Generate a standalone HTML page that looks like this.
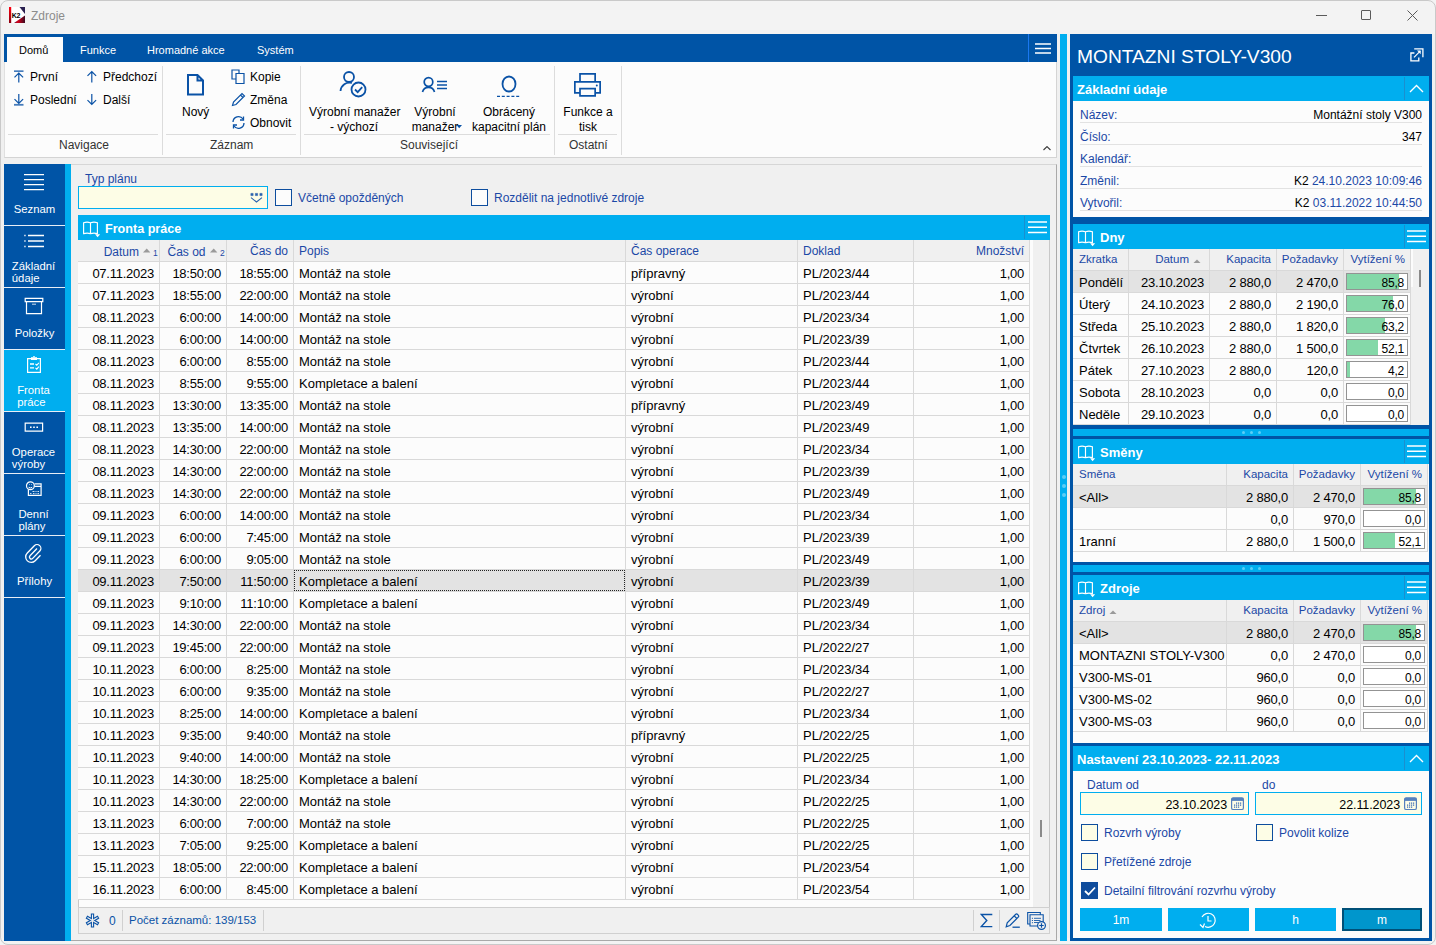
<!DOCTYPE html><html><head><meta charset="utf-8"><title>Zdroje</title><style>
*{box-sizing:border-box;margin:0;padding:0}
html,body{width:1436px;height:945px;overflow:hidden;background:#f3f3f3;font-family:"Liberation Sans",sans-serif;font-size:12px;color:#000}
.a{position:absolute}
.t{position:absolute;white-space:pre;line-height:1}
.hb{position:absolute;width:17px;height:12px}
.hb i{position:absolute;left:0;width:17px;height:1.5px;background:#fff}
table{border-collapse:separate;border-spacing:0;table-layout:fixed}
.g td{height:22px;border-right:1px solid #d9d9d9;border-bottom:1px solid #d9d9d9;padding:3px 5px 0 5px;vertical-align:top;white-space:nowrap;overflow:hidden;font-size:13px;line-height:17px;background:#fcfcfc}
.g td.r{text-align:right;letter-spacing:-0.25px}
.g tr.sel td{background:#e3e3e3}
.gh td{height:21px;border-right:1px solid #d9d9d9;border-bottom:1px solid #d9d9d9;padding:1px 5px 0 5px;white-space:nowrap;overflow:hidden;font-size:12px;line-height:20px;color:#1b48a6;background:#f0f0f0}
.gh2 td{font-size:11.3px}
.gh td.r{text-align:right}
.sec{position:absolute;background:#00aeef;color:#fff;font-weight:bold;font-size:13px}
.w{color:#fff}
.lbl{color:#1b48a6}
.cb{position:absolute;width:17px;height:17px;border:1px solid #0d4d9e;background:#fcfcfc}
.cby{background:#fdfde6}
.bar{position:absolute;border:1px solid #939393;background:#fff}
.bar i{position:absolute;left:0;top:0;bottom:0;background:#84d8a8}
.bar span{position:absolute;right:3px;top:2px;line-height:15px;font-size:12px;letter-spacing:-0.2px}
</style></head><body>
<div class="a" style="position:absolute;left:0px;top:0px;width:1436px;height:945px;border:1px solid #c9c9c9;border-radius:8px;background:#f3f3f3"></div>
<div class="a" style="position:absolute;left:1px;top:34px;width:1434px;height:904px;background:#f0f0f0"></div>
<svg class="a" style="left:9px;top:7px" width="16" height="16"><defs><linearGradient id="rg" x1="0" y1="0" x2="0" y2="1"><stop offset="0" stop-color="#ff0010"/><stop offset="1" stop-color="#8a0010"/></linearGradient><linearGradient id="bg2" x1="0" y1="0" x2="1" y2="0"><stop offset="0" stop-color="#5a1a3a"/><stop offset="0.35" stop-color="#d8001a"/><stop offset="1" stop-color="#3a0a20"/></linearGradient></defs><rect width="16" height="16" fill="#fff"/><rect x="0" y="0" width="2.2" height="16" fill="url(#rg)"/><path d="M10.5 0H16V7Z" fill="#2a2050"/><path d="M5 16L16 8.5V16Z" fill="url(#bg2)"/><text x="2.8" y="10.6" font-family="Liberation Sans" font-weight="bold" font-size="7" letter-spacing="-0.4" fill="#000">K2</text></svg>
<div class="t" style="left:31px;top:10px;font-size:12px;color:#8c8c8c">Zdroje</div>
<div class="a" style="position:absolute;left:1316px;top:15px;width:11px;height:1px;background:#5a5a5a"></div>
<div class="a" style="position:absolute;left:1361px;top:10px;width:10px;height:10px;border:1px solid #5a5a5a;border-radius:1px"></div>
<svg class="a" style="left:1407px;top:10px" width="11" height="11"><path d="M0.5 0.5L10.5 10.5M10.5 0.5L0.5 10.5" stroke="#5a5a5a" stroke-width="1"/></svg>
<div class="a" style="position:absolute;left:4px;top:34px;width:1053px;height:28px;background:#0054a6"></div>
<div class="a" style="position:absolute;left:7px;top:37px;width:56px;height:25px;background:#fcfcfc"></div>
<div class="t" style="left:19px;top:45px;font-size:11px;color:#000">Domů</div>
<div class="t w" style="left:80px;top:45px;font-size:11px">Funkce</div>
<div class="t w" style="left:147px;top:45px;font-size:11px">Hromadné akce</div>
<div class="t w" style="left:257px;top:45px;font-size:11px">Systém</div>
<div class="a" style="position:absolute;left:1028px;top:34px;width:1px;height:28px;background:#1a78f0"></div>
<svg class="a" style="left:1035px;top:41.5px" width="16" height="13"><path d="M0 2.00H16M0 6.50H16M0 11.00H16" stroke="#fff" stroke-width="1.3"/></svg>
<div class="a" style="position:absolute;left:4px;top:62px;width:1053px;height:96px;background:#fcfcfc;border-bottom:1px solid #d4d4d4;border-left:1px solid #e0e0e0;border-right:1px solid #d4d4d4"></div>
<div class="a" style="position:absolute;left:162px;top:66px;width:1px;height:89px;background:#dcdcdc"></div>
<div class="a" style="position:absolute;left:300px;top:66px;width:1px;height:89px;background:#dcdcdc"></div>
<div class="a" style="position:absolute;left:554px;top:66px;width:1px;height:89px;background:#dcdcdc"></div>
<div class="a" style="position:absolute;left:621px;top:66px;width:1px;height:89px;background:#dcdcdc"></div>
<div class="a" style="position:absolute;left:8px;top:134px;width:150px;height:1px;background:#dcdcdc"></div>
<div class="a" style="position:absolute;left:166px;top:134px;width:130px;height:1px;background:#dcdcdc"></div>
<div class="a" style="position:absolute;left:304px;top:134px;width:246px;height:1px;background:#dcdcdc"></div>
<div class="a" style="position:absolute;left:558px;top:134px;width:59px;height:1px;background:#dcdcdc"></div>
<div class="t" style="left:59px;top:139px;color:#333">Navigace</div>
<div class="t" style="left:210px;top:139px;color:#333">Záznam</div>
<div class="t" style="left:400px;top:139px;color:#333">Související</div>
<div class="t" style="left:569px;top:139px;color:#333">Ostatní</div>
<svg class="a" style="left:13px;top:69px" width="12" height="15"><path d="M1 2.2H10.5M5.8 3.5V13.5M1.5 8.3L5.8 4L10.1 8.3" stroke="#0a52a6" stroke-width="1.2" fill="none"/></svg>
<svg class="a" style="left:13px;top:92px" width="12" height="15"><path d="M1 12.8H10.5" stroke="#0a52a6" stroke-width="1.8" stroke-opacity="0.75"/><path d="M5.8 2V11.5M1.5 7.2L5.8 11.5L10.1 7.2" stroke="#0a52a6" stroke-width="1.2" fill="none"/></svg>
<svg class="a" style="left:86px;top:69px" width="12" height="15"><path d="M5.8 3V13.5M1.5 6.8L5.8 2.5L10.1 6.8" stroke="#0a52a6" stroke-width="1.2" fill="none"/></svg>
<svg class="a" style="left:86px;top:92px" width="12" height="15"><path d="M5.8 2V12.5M1.5 8.2L5.8 12.5L10.1 8.2" stroke="#0a52a6" stroke-width="1.2" fill="none"/></svg>
<div class="t" style="left:30px;top:71px">První</div>
<div class="t" style="left:30px;top:94px">Poslední</div>
<div class="t" style="left:103px;top:71px">Předchozí</div>
<div class="t" style="left:103px;top:94px">Další</div>
<svg class="a" style="left:186px;top:73px" width="19" height="23"><path d="M2 2H11.5L17 7.5V21.5H2Z M11.5 2V7.5H17" stroke="#0a52a6" stroke-width="2" fill="none" stroke-linejoin="miter"/></svg>
<div class="t" style="left:182px;top:106px">Nový</div>
<svg class="a" style="left:231px;top:69px" width="15" height="16"><path d="M1 1H8V10H1Z" stroke="#0a52a6" stroke-width="1.2" fill="none"/><path d="M5 4.5H13V14.5H5Z" stroke="#0a52a6" stroke-width="1.2" fill="#fcfcfc"/></svg>
<svg class="a" style="left:231px;top:92px" width="15" height="15"><path d="M1.5 13.5L2.5 10L11 1.5L13.5 4L5 12.5Z M9.5 3L12 5.5" stroke="#0a52a6" stroke-width="1.2" fill="none"/></svg>
<svg class="a" style="left:231px;top:115px" width="15" height="15"><path d="M2 7A5.5 5.5 0 0 1 12 4M13 8A5.5 5.5 0 0 1 3 11" stroke="#0a52a6" stroke-width="1.3" fill="none"/><path d="M12.5 1.5V5H9M2.5 13.5V10H6" stroke="#0a52a6" stroke-width="1.3" fill="none"/></svg>
<div class="t" style="left:250px;top:71px">Kopie</div>
<div class="t" style="left:250px;top:94px">Změna</div>
<div class="t" style="left:250px;top:117px">Obnovit</div>
<svg class="a" style="left:339px;top:70px" width="30" height="28"><circle cx="10" cy="7" r="5" stroke="#0a52a6" stroke-width="1.8" fill="none"/><path d="M1.5 21A9 9 0 0 1 13 13" stroke="#0a52a6" stroke-width="1.8" fill="none"/><circle cx="19.5" cy="19.5" r="7" stroke="#0a52a6" stroke-width="1.8" fill="#fcfcfc"/><path d="M16 19.5L18.7 22.2L23.2 17.2" stroke="#0a52a6" stroke-width="1.8" fill="none"/></svg>
<div class="t" style="left:309px;top:106px;width:90px;text-align:center">Výrobní manažer</div>
<div class="t" style="left:309px;top:121px;width:90px;text-align:center">- výchozí</div>
<svg class="a" style="left:421px;top:75px" width="28" height="18"><circle cx="7.5" cy="7" r="4.3" stroke="#0a52a6" stroke-width="1.7" fill="none"/><path d="M1.5 17A6.2 6.2 0 0 1 13.5 17" stroke="#0a52a6" stroke-width="1.7" fill="none"/><path d="M16 6.5H26M16 10H26M16 13.5H26" stroke="#0a52a6" stroke-width="1.5"/></svg>
<div class="t" style="left:405px;top:106px;width:60px;text-align:center">Výrobní</div>
<div class="t" style="left:405px;top:121px;width:60px;text-align:center">manažer</div>
<svg class="a" style="left:456px;top:125px" width="6" height="4"><path d="M0.5 0H6L3.2 3.2Z" fill="#0a52a6"/></svg>
<svg class="a" style="left:496px;top:75px" width="26" height="22"><ellipse cx="13" cy="9" rx="6.5" ry="7.5" stroke="#0a52a6" stroke-width="1.8" fill="none"/><path d="M1 21.5H25" stroke="#0a52a6" stroke-width="1.6" stroke-dasharray="3 1.8"/></svg>
<div class="t" style="left:464px;top:106px;width:90px;text-align:center">Obrácený</div>
<div class="t" style="left:464px;top:121px;width:90px;text-align:center">kapacitní plán</div>
<svg class="a" style="left:573px;top:72px" width="29" height="26"><path d="M7 9V1.85H22.15V9 M7 20.95H1.85V9.85H27.15V20.95H22.15 M7 16.65H22.15V23.85H7Z" stroke="#0a52a6" stroke-width="1.7" fill="none"/><circle cx="23.8" cy="13.4" r="1" fill="#0a52a6"/></svg>
<div class="t" style="left:556px;top:106px;width:64px;text-align:center">Funkce a</div>
<div class="t" style="left:556px;top:121px;width:64px;text-align:center">tisk</div>
<svg class="a" style="left:1043px;top:146px" width="8" height="5"><path d="M0.5 4L4 0.6L7.5 4" stroke="#3a3a3a" stroke-width="1.1" fill="none"/></svg>
<div class="a" style="position:absolute;left:4px;top:164px;width:61px;height:777px;background:#0054a6"></div>
<div class="a" style="position:absolute;left:65px;top:164px;width:6px;height:777px;background:#00aeef"></div>
<div class="a" style="position:absolute;left:4px;top:164px;width:61px;height:61px;background:#0054a6"></div>
<div class="a" style="position:absolute;left:4px;top:225px;width:61px;height:1px;background:#e8eef6"></div>
<div class="t w" style="left:4px;top:204px;width:61px;text-align:center;font-size:11.3px">Seznam</div>
<div class="a" style="position:absolute;left:4px;top:226px;width:61px;height:61px;background:#0054a6"></div>
<div class="a" style="position:absolute;left:4px;top:287px;width:61px;height:1px;background:#e8eef6"></div>
<div class="a w" style="left:4px;top:260px;width:59px;text-align:center;font-size:11.3px;line-height:12px"><div style="display:inline-block;text-align:left;white-space:pre">Základní<br>údaje</div></div>
<div class="a" style="position:absolute;left:4px;top:288px;width:61px;height:61px;background:#0054a6"></div>
<div class="a" style="position:absolute;left:4px;top:349px;width:61px;height:1px;background:#e8eef6"></div>
<div class="t w" style="left:4px;top:328px;width:61px;text-align:center;font-size:11.3px">Položky</div>
<div class="a" style="position:absolute;left:4px;top:350px;width:61px;height:61px;background:#00aeef"></div>
<div class="a" style="position:absolute;left:4px;top:411px;width:61px;height:1px;background:#e8eef6"></div>
<div class="a w" style="left:4px;top:384px;width:59px;text-align:center;font-size:11.3px;line-height:12px"><div style="display:inline-block;text-align:left;white-space:pre">Fronta<br>práce</div></div>
<div class="a" style="position:absolute;left:4px;top:412px;width:61px;height:61px;background:#0054a6"></div>
<div class="a" style="position:absolute;left:4px;top:473px;width:61px;height:1px;background:#e8eef6"></div>
<div class="a w" style="left:4px;top:446px;width:59px;text-align:center;font-size:11.3px;line-height:12px"><div style="display:inline-block;text-align:left;white-space:pre">Operace<br>výroby</div></div>
<div class="a" style="position:absolute;left:4px;top:474px;width:61px;height:61px;background:#0054a6"></div>
<div class="a" style="position:absolute;left:4px;top:535px;width:61px;height:1px;background:#e8eef6"></div>
<div class="a w" style="left:4px;top:508px;width:59px;text-align:center;font-size:11.3px;line-height:12px"><div style="display:inline-block;text-align:left;white-space:pre">Denní<br>plány</div></div>
<div class="a" style="position:absolute;left:4px;top:536px;width:61px;height:61px;background:#0054a6"></div>
<div class="a" style="position:absolute;left:4px;top:597px;width:61px;height:1px;background:#e8eef6"></div>
<div class="t w" style="left:4px;top:576px;width:61px;text-align:center;font-size:11.3px">Přílohy</div>
<svg class="a" style="left:24px;top:173px" width="21" height="18"><path d="M0 1.6H20M0 6.6H20M0 11.6H20M0 16.6H20" stroke="#fff" stroke-width="1.3"/></svg>
<svg class="a" style="left:24px;top:234px" width="21" height="14"><path d="M4 1.5H20M4 7H20M4 12.5H20" stroke="#fff" stroke-width="1.3"/><path d="M0.3 1.5H1.6M0.3 7H1.6M0.3 12.5H1.6" stroke="#fff" stroke-width="1.3"/></svg>
<svg class="a" style="left:24px;top:297px" width="20" height="18"><path d="M1.2 1.4H18.8V4.6H1.2Z M2.5 4.6V16.6H17.5V4.6" stroke="#fff" stroke-width="1.2" fill="none"/><path d="M8 7.2H12" stroke="#fff" stroke-width="1" stroke-opacity="0.8"/></svg>
<svg class="a" style="left:26px;top:356px" width="16" height="18"><path d="M1.6 2.6H14.4V16.4H1.6Z" stroke="#fff" stroke-width="1.2" fill="none"/><path d="M5 1.2H11V4H5Z" fill="#fff"/><path d="M7.2 0.6H8.8" stroke="#fff" stroke-width="1"/><path d="M4 8H8M4 11.8H8" stroke="#fff" stroke-width="1.3"/><path d="M9.5 8L10.8 9.3L12.8 6.8M9.5 11.8L10.8 13.1L12.8 10.6" stroke="#fff" stroke-width="1.1" fill="none"/></svg>
<svg class="a" style="left:24px;top:422px" width="20" height="11"><path d="M1.2 1.2H18.6V9.2H1.2Z" stroke="#fff" stroke-width="1.2" fill="none"/><path d="M6 5.2H7.6M9.2 5.2H10.8M12.4 5.2H14" stroke="#fff" stroke-width="1.6"/></svg>
<svg class="a" style="left:24px;top:480px" width="20" height="18"><path d="M4.4 9.5V15.3H17.1V3.8H10.5 M10.2 6.3H16.5" stroke="#fff" stroke-width="1.2" fill="none"/><path d="M8.5 11.5H10.5M11.5 11.5H12.5M13.5 11.5H15M6 13.6H7.5M9 13.6H10.5M11.5 13.6H12.5M13.5 13.6H15" stroke="#fff" stroke-width="1" stroke-opacity="0.85"/><circle cx="6.4" cy="5.8" r="3.9" stroke="#fff" stroke-width="1.2" fill="#0054a6"/><path d="M4.6 7.3Q6.4 8.6 8.2 7.3" stroke="#fff" stroke-width="1" fill="none"/><path d="M5 4.6H5.6M7.3 4.6H7.9" stroke="#fff" stroke-width="1"/></svg>
<svg class="a" style="left:24px;top:543px" width="20" height="21"><path d="M13 5.5L6 12.8A1.8 1.8 0 0 0 8.7 15.4L15.8 8A3.8 3.8 0 0 0 10.3 2.7L3.3 10A5.5 5.5 0 0 0 11.2 17.8L16.5 12.3" stroke="#fff" stroke-width="1.3" fill="none"/></svg>
<div class="a" style="position:absolute;left:71px;top:164px;width:986px;height:777px;background:#f0f0f0;border-top:1px solid #d6d6d6;border-right:1px solid #a9a9a9;border-bottom:1px solid #a9a9a9"></div>
<div class="t lbl" style="left:85px;top:173px">Typ plánu</div>
<div class="a" style="position:absolute;left:78px;top:186px;width:190px;height:23px;background:#fdfde6;border:1px solid #00aeef"></div>
<svg class="a" style="left:249px;top:191px" width="15" height="13"><path d="M1.9 2.4H4.1V4.6H1.9Z M6.4 2.4H8.6V4.6H6.4Z M10.9 2.4H13.1V4.6H10.9Z" fill="#2a62ad" stroke="#2a62ad" stroke-width="0.6"/><path d="M2 6.6L7.5 11L13 6.6" stroke="#2a62ad" stroke-width="1.1" fill="none"/></svg>
<div class="cb" style="left:275px;top:189px"></div>
<div class="t lbl" style="left:298px;top:192px">Včetně opožděných</div>
<div class="cb" style="left:471px;top:189px"></div>
<div class="t lbl" style="left:494px;top:192px">Rozdělit na jednotlivé zdroje</div>
<div class="sec" style="position:absolute;left:78px;top:215px;width:972px;height:25px;"></div>
<svg class="a" style="left:82px;top:220px" width="19" height="18"><path d="M1.6 2.7Q5 1.7 8.5 2.7Q12 1.7 15.4 2.7V13.6Q12 12.7 8.5 13.6Q5 12.7 1.6 13.6Z M8.5 2.7V14.2" stroke="#fff" stroke-width="1.15" fill="none"/><path d="M13.1 14.3H18.1L15.6 17.3Z" fill="#fff"/></svg>
<div class="t" style="left:105px;top:223px;font-weight:bold;font-size:12.6px;color:#fff">Fronta práce</div>
<div class="a" style="position:absolute;left:1024px;top:216px;width:1px;height:23px;background:#1a8fcf"></div>
<svg class="a" style="left:1028px;top:220.3px" width="19" height="15"><path d="M0 2.00H19M0 7.30H19M0 12.60H19" stroke="#fff" stroke-width="1.5"/></svg>
<div class="a" style="position:absolute;left:78px;top:240px;width:972px;height:667px;background:#fcfcfc;border-right:1px solid #c8c8c8"></div>
<div class="a" style="position:absolute;left:1033px;top:240px;width:16px;height:667px;background:#f0f0f0"></div>
<div class="a" style="position:absolute;left:1040px;top:820px;width:2px;height:17px;background:#8a8a8a"></div>
<div class="a" style="position:absolute;left:78px;top:240px;width:1px;height:667px;background:#c8c8c8"></div>
<table class="gh" style="position:absolute;left:78px;top:240px;width:952px"><colgroup><col style="width:82px"><col style="width:67px"><col style="width:67px"><col style="width:332px"><col style="width:172px"><col style="width:116px"><col style="width:116px"></colgroup><tr><td></td><td></td><td class="r">Čas do</td><td>Popis</td><td>Čas operace</td><td>Doklad</td><td class="r">Množství</td></tr></table>
<table class="g" style="position:absolute;left:78px;top:262px;width:952px"><colgroup><col style="width:82px"><col style="width:67px"><col style="width:67px"><col style="width:332px"><col style="width:172px"><col style="width:116px"><col style="width:116px"></colgroup>
<tr><td class="r">07.11.2023</td><td class="r">18:50:00</td><td class="r">18:55:00</td><td>Montáž na stole</td><td>přípravný</td><td>PL/2023/44</td><td class="r">1,00</td></tr>
<tr><td class="r">07.11.2023</td><td class="r">18:55:00</td><td class="r">22:00:00</td><td>Montáž na stole</td><td>výrobní</td><td>PL/2023/44</td><td class="r">1,00</td></tr>
<tr><td class="r">08.11.2023</td><td class="r">6:00:00</td><td class="r">14:00:00</td><td>Montáž na stole</td><td>výrobní</td><td>PL/2023/34</td><td class="r">1,00</td></tr>
<tr><td class="r">08.11.2023</td><td class="r">6:00:00</td><td class="r">14:00:00</td><td>Montáž na stole</td><td>výrobní</td><td>PL/2023/39</td><td class="r">1,00</td></tr>
<tr><td class="r">08.11.2023</td><td class="r">6:00:00</td><td class="r">8:55:00</td><td>Montáž na stole</td><td>výrobní</td><td>PL/2023/44</td><td class="r">1,00</td></tr>
<tr><td class="r">08.11.2023</td><td class="r">8:55:00</td><td class="r">9:55:00</td><td>Kompletace a balení</td><td>výrobní</td><td>PL/2023/44</td><td class="r">1,00</td></tr>
<tr><td class="r">08.11.2023</td><td class="r">13:30:00</td><td class="r">13:35:00</td><td>Montáž na stole</td><td>přípravný</td><td>PL/2023/49</td><td class="r">1,00</td></tr>
<tr><td class="r">08.11.2023</td><td class="r">13:35:00</td><td class="r">14:00:00</td><td>Montáž na stole</td><td>výrobní</td><td>PL/2023/49</td><td class="r">1,00</td></tr>
<tr><td class="r">08.11.2023</td><td class="r">14:30:00</td><td class="r">22:00:00</td><td>Montáž na stole</td><td>výrobní</td><td>PL/2023/34</td><td class="r">1,00</td></tr>
<tr><td class="r">08.11.2023</td><td class="r">14:30:00</td><td class="r">22:00:00</td><td>Montáž na stole</td><td>výrobní</td><td>PL/2023/39</td><td class="r">1,00</td></tr>
<tr><td class="r">08.11.2023</td><td class="r">14:30:00</td><td class="r">22:00:00</td><td>Montáž na stole</td><td>výrobní</td><td>PL/2023/49</td><td class="r">1,00</td></tr>
<tr><td class="r">09.11.2023</td><td class="r">6:00:00</td><td class="r">14:00:00</td><td>Montáž na stole</td><td>výrobní</td><td>PL/2023/34</td><td class="r">1,00</td></tr>
<tr><td class="r">09.11.2023</td><td class="r">6:00:00</td><td class="r">7:45:00</td><td>Montáž na stole</td><td>výrobní</td><td>PL/2023/39</td><td class="r">1,00</td></tr>
<tr><td class="r">09.11.2023</td><td class="r">6:00:00</td><td class="r">9:05:00</td><td>Montáž na stole</td><td>výrobní</td><td>PL/2023/49</td><td class="r">1,00</td></tr>
<tr class="sel"><td class="r">09.11.2023</td><td class="r">7:50:00</td><td class="r">11:50:00</td><td>Kompletace a balení</td><td>výrobní</td><td>PL/2023/39</td><td class="r">1,00</td></tr>
<tr><td class="r">09.11.2023</td><td class="r">9:10:00</td><td class="r">11:10:00</td><td>Kompletace a balení</td><td>výrobní</td><td>PL/2023/49</td><td class="r">1,00</td></tr>
<tr><td class="r">09.11.2023</td><td class="r">14:30:00</td><td class="r">22:00:00</td><td>Montáž na stole</td><td>výrobní</td><td>PL/2023/34</td><td class="r">1,00</td></tr>
<tr><td class="r">09.11.2023</td><td class="r">19:45:00</td><td class="r">22:00:00</td><td>Montáž na stole</td><td>výrobní</td><td>PL/2022/27</td><td class="r">1,00</td></tr>
<tr><td class="r">10.11.2023</td><td class="r">6:00:00</td><td class="r">8:25:00</td><td>Montáž na stole</td><td>výrobní</td><td>PL/2023/34</td><td class="r">1,00</td></tr>
<tr><td class="r">10.11.2023</td><td class="r">6:00:00</td><td class="r">9:35:00</td><td>Montáž na stole</td><td>výrobní</td><td>PL/2022/27</td><td class="r">1,00</td></tr>
<tr><td class="r">10.11.2023</td><td class="r">8:25:00</td><td class="r">14:00:00</td><td>Kompletace a balení</td><td>výrobní</td><td>PL/2023/34</td><td class="r">1,00</td></tr>
<tr><td class="r">10.11.2023</td><td class="r">9:35:00</td><td class="r">9:40:00</td><td>Montáž na stole</td><td>přípravný</td><td>PL/2022/25</td><td class="r">1,00</td></tr>
<tr><td class="r">10.11.2023</td><td class="r">9:40:00</td><td class="r">14:00:00</td><td>Montáž na stole</td><td>výrobní</td><td>PL/2022/25</td><td class="r">1,00</td></tr>
<tr><td class="r">10.11.2023</td><td class="r">14:30:00</td><td class="r">18:25:00</td><td>Kompletace a balení</td><td>výrobní</td><td>PL/2023/34</td><td class="r">1,00</td></tr>
<tr><td class="r">10.11.2023</td><td class="r">14:30:00</td><td class="r">22:00:00</td><td>Montáž na stole</td><td>výrobní</td><td>PL/2022/25</td><td class="r">1,00</td></tr>
<tr><td class="r">13.11.2023</td><td class="r">6:00:00</td><td class="r">7:00:00</td><td>Montáž na stole</td><td>výrobní</td><td>PL/2022/25</td><td class="r">1,00</td></tr>
<tr><td class="r">13.11.2023</td><td class="r">7:05:00</td><td class="r">9:25:00</td><td>Kompletace a balení</td><td>výrobní</td><td>PL/2022/25</td><td class="r">1,00</td></tr>
<tr><td class="r">15.11.2023</td><td class="r">18:05:00</td><td class="r">22:00:00</td><td>Kompletace a balení</td><td>výrobní</td><td>PL/2023/54</td><td class="r">1,00</td></tr>
<tr><td class="r">16.11.2023</td><td class="r">6:00:00</td><td class="r">8:45:00</td><td>Kompletace a balení</td><td>výrobní</td><td>PL/2023/54</td><td class="r">1,00</td></tr>
</table>
<div class="a" style="position:absolute;left:78px;top:261px;width:951px;height:1px;background:#d9d9d9"></div>
<div class="t lbl" style="left:79px;top:246px;width:60px;text-align:right;font-size:12px">Datum</div>
<svg class="a" style="left:143px;top:248px" width="8" height="5"><path d="M0 4.6L3.7 0.6L7.4 4.6Z" fill="#9a9a9a"/></svg>
<div class="t lbl" style="left:153px;top:249px;font-size:8.5px">1</div>
<div class="t lbl" style="left:145.5px;top:246px;width:60px;text-align:right;font-size:12px">Čas od</div>
<svg class="a" style="left:210px;top:248px" width="8" height="5"><path d="M0 4.6L3.7 0.6L7.4 4.6Z" fill="#9a9a9a"/></svg>
<div class="t lbl" style="left:220px;top:249px;font-size:8.5px">2</div>
<div class="a" style="position:absolute;left:294px;top:570px;width:331px;height:21px;border:1px dotted #222"></div>
<div class="a" style="position:absolute;left:78px;top:907px;width:972px;height:27px;background:#f0f0f0;border:1px solid #d0d0d0"></div>
<svg class="a" style="left:84px;top:912px" width="17" height="17"><path d="M8.5 1.50V15.50M2.44 5.00L14.56 12.00M2.44 12.00L14.56 5.00" stroke="#0a52a6" stroke-width="3.3"/><path d="M8.5 2.60V14.40M3.39 5.55L13.61 11.45M3.39 11.45L13.61 5.55" stroke="#f0f0f0" stroke-width="1.1"/></svg>
<div class="t" style="left:109px;top:915px;color:#0a52a6">0</div>
<div class="a" style="position:absolute;left:122px;top:910px;width:1px;height:21px;background:#d0d0d0"></div>
<div class="t" style="left:129px;top:915px;color:#0a52a6;font-size:11.5px">Počet záznamů: 139/153</div>
<div class="a" style="position:absolute;left:973px;top:910px;width:1px;height:21px;background:#d0d0d0"></div>
<div class="a" style="position:absolute;left:263px;top:910px;width:1px;height:21px;background:#d0d0d0"></div>
<div class="a" style="position:absolute;left:999px;top:910px;width:1px;height:21px;background:#d0d0d0"></div>
<svg class="a" style="left:980px;top:913px" width="14" height="16"><path d="M12.3 1.5H1.3L6.8 7.5L1.3 13.6H12.3" stroke="#0a52a6" stroke-width="1.4" fill="none"/></svg>
<svg class="a" style="left:1005px;top:912px" width="16" height="17"><path d="M1.2 14.8L2.2 10.8L10.5 2.5A1.5 1.5 0 0 1 12.6 2.5L13.2 3.1A1.5 1.5 0 0 1 13.2 5.2L4.9 13.5Z M9.2 3.8L11.9 6.5" stroke="#0a52a6" stroke-width="1.2" fill="none"/><path d="M7.5 15.2H14.8" stroke="#0a52a6" stroke-width="1.3"/></svg>
<svg class="a" style="left:1026px;top:911px" width="22" height="22"><path d="M1.7 1.5H14.3V13H1.7Z" stroke="#0a52a6" stroke-width="1.1" fill="none"/><path d="M4 3.7H17.2V15H4Z" stroke="#0a52a6" stroke-width="1.1" fill="#f0f0f0"/><path d="M6.4 6.8V7.8M6.4 9V10M6.4 11.2V12.2" stroke="#0a52a6" stroke-width="1"/><path d="M8 7.3H15M8 9.5H14.5M8 11.5H12.5" stroke="#0a52a6" stroke-width="1" stroke-opacity="0.85"/><circle cx="15.5" cy="14.5" r="3.9" stroke="#0a52a6" stroke-width="1.2" fill="#f0f0f0"/><path d="M15.5 12.3V16.7M13.3 14.5H17.7" stroke="#0a52a6" stroke-width="1.2"/></svg>
<div class="a" style="position:absolute;left:1060px;top:34px;width:7px;height:907px;background:#00aeef"></div>
<div class="a" style="position:absolute;left:1061.5px;top:475px;width:4px;height:4px;background:#5ccdf6;border-radius:50%"></div>
<div class="a" style="position:absolute;left:1061.5px;top:484px;width:4px;height:4px;background:#5ccdf6;border-radius:50%"></div>
<div class="a" style="position:absolute;left:1061.5px;top:493px;width:4px;height:4px;background:#5ccdf6;border-radius:50%"></div>
<div class="a" style="position:absolute;left:1070px;top:34px;width:362px;height:907px;background:#0054a6"></div>
<div class="t w" style="left:1077px;top:47px;font-size:19.2px">MONTAZNI STOLY-V300</div>
<svg class="a" style="left:1409px;top:47px" width="16" height="16"><path d="M5.2 1.9H13.9V10.3" stroke="#fff" stroke-width="1.3" fill="none"/><path d="M9.8 10.5V13.9H1.9V6H5.4" stroke="#fff" stroke-width="1.3" fill="none"/><path d="M5 10.3L11.2 4.1" stroke="#fff" stroke-width="1.2"/><path d="M8 3.6H11.7V7.3Z" fill="#fff"/></svg>
<div class="sec" style="position:absolute;left:1073px;top:76px;width:356px;height:25px;"></div><div class="t" style="left:1077px;top:83px;font-weight:bold;font-size:13px;color:#fff">Základní údaje</div><div class="a" style="position:absolute;left:1404px;top:77px;width:1px;height:23px;background:#1a8fcf"></div><svg class="a" style="left:1409px;top:84px" width="15" height="9"><path d="M1 8L7.5 1.5L14 8" stroke="#fff" stroke-width="1.4" fill="none"/></svg>
<div class="a" style="position:absolute;left:1073px;top:101px;width:356px;height:116px;background:#fcfcfc"></div>
<div class="t lbl" style="left:1080px;top:109px">Název:</div>
<div class="t" style="left:1200px;top:109px;width:222px;text-align:right">Montážní stoly V300</div>
<div class="a" style="position:absolute;left:1080px;top:122px;width:342px;height:1px;background:#e2e2e2"></div>
<div class="t lbl" style="left:1080px;top:131px">Číslo:</div>
<div class="t" style="left:1200px;top:131px;width:222px;text-align:right">347</div>
<div class="a" style="position:absolute;left:1080px;top:144px;width:342px;height:1px;background:#e2e2e2"></div>
<div class="t lbl" style="left:1080px;top:153px">Kalendář:</div>
<div class="t" style="left:1200px;top:153px;width:222px;text-align:right"></div>
<div class="a" style="position:absolute;left:1080px;top:166px;width:342px;height:1px;background:#e2e2e2"></div>
<div class="t lbl" style="left:1080px;top:175px">Změnil:</div>
<div class="t" style="left:1200px;top:175px;width:222px;text-align:right">K2 <span class="lbl">24.10.2023 10:09:46</span></div>
<div class="a" style="position:absolute;left:1080px;top:188px;width:342px;height:1px;background:#e2e2e2"></div>
<div class="t lbl" style="left:1080px;top:197px">Vytvořil:</div>
<div class="t" style="left:1200px;top:197px;width:222px;text-align:right">K2 <span class="lbl">03.11.2022 10:44:50</span></div>
<div class="a" style="position:absolute;left:1080px;top:210px;width:342px;height:1px;background:#e2e2e2"></div>
<div class="sec" style="position:absolute;left:1073px;top:224px;width:356px;height:25px;"></div><svg class="a" style="left:1077px;top:229px" width="19" height="18"><path d="M1.6 2.7Q5 1.7 8.5 2.7Q12 1.7 15.4 2.7V13.6Q12 12.7 8.5 13.6Q5 12.7 1.6 13.6Z M8.5 2.7V14.2" stroke="#fff" stroke-width="1.15" fill="none"/><path d="M13.1 14.3H18.1L15.6 17.3Z" fill="#fff"/></svg><div class="t" style="left:1100px;top:231px;font-weight:bold;font-size:13px;color:#fff">Dny</div><div class="a" style="position:absolute;left:1404px;top:225px;width:1px;height:23px;background:#1a8fcf"></div><svg class="a" style="left:1407px;top:229.3px" width="19" height="14"><path d="M0 2.00H19M0 7.25H19M0 12.50H19" stroke="#fff" stroke-width="1.5"/></svg>
<div class="a" style="position:absolute;left:1073px;top:249px;width:356px;height:176px;background:#f0f0f0"></div>
<div class="a" style="position:absolute;left:1411px;top:249px;width:2px;height:38px;background:#fcfcfc"></div>
<div class="a" style="position:absolute;left:1073px;top:249px;width:337px;height:21px;background:#f0f0f0"></div><div class="a" style="position:absolute;left:1073px;top:270px;width:338px;height:1px;background:#d9d9d9"></div><div class="a" style="position:absolute;left:1073px;top:271px;width:337px;height:21px;background:#e3e3e3"></div><div class="a" style="position:absolute;left:1073px;top:292px;width:338px;height:1px;background:#d9d9d9"></div><div class="a" style="position:absolute;left:1073px;top:293px;width:337px;height:21px;background:#fcfcfc"></div><div class="a" style="position:absolute;left:1073px;top:314px;width:338px;height:1px;background:#d9d9d9"></div><div class="a" style="position:absolute;left:1073px;top:315px;width:337px;height:21px;background:#fcfcfc"></div><div class="a" style="position:absolute;left:1073px;top:336px;width:338px;height:1px;background:#d9d9d9"></div><div class="a" style="position:absolute;left:1073px;top:337px;width:337px;height:21px;background:#fcfcfc"></div><div class="a" style="position:absolute;left:1073px;top:358px;width:338px;height:1px;background:#d9d9d9"></div><div class="a" style="position:absolute;left:1073px;top:359px;width:337px;height:21px;background:#fcfcfc"></div><div class="a" style="position:absolute;left:1073px;top:380px;width:338px;height:1px;background:#d9d9d9"></div><div class="a" style="position:absolute;left:1073px;top:381px;width:337px;height:21px;background:#fcfcfc"></div><div class="a" style="position:absolute;left:1073px;top:402px;width:338px;height:1px;background:#d9d9d9"></div><div class="a" style="position:absolute;left:1073px;top:403px;width:337px;height:21px;background:#fcfcfc"></div><div class="a" style="position:absolute;left:1073px;top:424px;width:338px;height:1px;background:#d9d9d9"></div><div class="a" style="position:absolute;left:1128px;top:249px;width:1px;height:176px;background:#d9d9d9"></div><div class="a" style="position:absolute;left:1209px;top:249px;width:1px;height:176px;background:#d9d9d9"></div><div class="a" style="position:absolute;left:1276px;top:249px;width:1px;height:176px;background:#d9d9d9"></div><div class="a" style="position:absolute;left:1343px;top:249px;width:1px;height:176px;background:#d9d9d9"></div><div class="a" style="position:absolute;left:1410px;top:249px;width:1px;height:176px;background:#d9d9d9"></div><div class="t lbl" style="left:1079px;top:254px;font-size:11.5px">Zkratka</div><div class="t lbl" style="left:1129px;top:254px;width:75px;text-align:right;font-size:11.5px">Datum<svg width="13" height="8" style="vertical-align:top;margin-top:2px;margin-left:2px"><path d="M2.5 7L6 3.5L9.5 7Z" fill="#9a9a9a"/></svg></div><div class="t lbl" style="left:1210px;top:254px;width:61px;text-align:right;font-size:11.5px">Kapacita</div><div class="t lbl" style="left:1277px;top:254px;width:61px;text-align:right;font-size:11.5px">Požadavky</div><div class="t lbl" style="left:1344px;top:254px;width:61px;text-align:right;font-size:11.5px">Vytížení %</div><div class="t" style="left:1079px;top:276px;font-size:13px">Pondělí</div><div class="t" style="left:1129px;top:276px;width:75px;text-align:right;font-size:13px;letter-spacing:-0.2px">23.10.2023</div><div class="t" style="left:1210px;top:276px;width:61px;text-align:right;font-size:13px;letter-spacing:-0.2px">2 880,0</div><div class="t" style="left:1277px;top:276px;width:61px;text-align:right;font-size:13px;letter-spacing:-0.2px">2 470,0</div><div class="bar" style="left:1346px;top:273px;width:62px;height:17px"><i style="width:51.5px"></i><span>85,8</span></div><div class="t" style="left:1079px;top:298px;font-size:13px">Úterý</div><div class="t" style="left:1129px;top:298px;width:75px;text-align:right;font-size:13px;letter-spacing:-0.2px">24.10.2023</div><div class="t" style="left:1210px;top:298px;width:61px;text-align:right;font-size:13px;letter-spacing:-0.2px">2 880,0</div><div class="t" style="left:1277px;top:298px;width:61px;text-align:right;font-size:13px;letter-spacing:-0.2px">2 190,0</div><div class="bar" style="left:1346px;top:295px;width:62px;height:17px"><i style="width:45.6px"></i><span>76,0</span></div><div class="t" style="left:1079px;top:320px;font-size:13px">Středa</div><div class="t" style="left:1129px;top:320px;width:75px;text-align:right;font-size:13px;letter-spacing:-0.2px">25.10.2023</div><div class="t" style="left:1210px;top:320px;width:61px;text-align:right;font-size:13px;letter-spacing:-0.2px">2 880,0</div><div class="t" style="left:1277px;top:320px;width:61px;text-align:right;font-size:13px;letter-spacing:-0.2px">1 820,0</div><div class="bar" style="left:1346px;top:317px;width:62px;height:17px"><i style="width:37.9px"></i><span>63,2</span></div><div class="t" style="left:1079px;top:342px;font-size:13px">Čtvrtek</div><div class="t" style="left:1129px;top:342px;width:75px;text-align:right;font-size:13px;letter-spacing:-0.2px">26.10.2023</div><div class="t" style="left:1210px;top:342px;width:61px;text-align:right;font-size:13px;letter-spacing:-0.2px">2 880,0</div><div class="t" style="left:1277px;top:342px;width:61px;text-align:right;font-size:13px;letter-spacing:-0.2px">1 500,0</div><div class="bar" style="left:1346px;top:339px;width:62px;height:17px"><i style="width:31.3px"></i><span>52,1</span></div><div class="t" style="left:1079px;top:364px;font-size:13px">Pátek</div><div class="t" style="left:1129px;top:364px;width:75px;text-align:right;font-size:13px;letter-spacing:-0.2px">27.10.2023</div><div class="t" style="left:1210px;top:364px;width:61px;text-align:right;font-size:13px;letter-spacing:-0.2px">2 880,0</div><div class="t" style="left:1277px;top:364px;width:61px;text-align:right;font-size:13px;letter-spacing:-0.2px">120,0</div><div class="bar" style="left:1346px;top:361px;width:62px;height:17px"><i style="width:2.5px"></i><span>4,2</span></div><div class="t" style="left:1079px;top:386px;font-size:13px">Sobota</div><div class="t" style="left:1129px;top:386px;width:75px;text-align:right;font-size:13px;letter-spacing:-0.2px">28.10.2023</div><div class="t" style="left:1210px;top:386px;width:61px;text-align:right;font-size:13px;letter-spacing:-0.2px">0,0</div><div class="t" style="left:1277px;top:386px;width:61px;text-align:right;font-size:13px;letter-spacing:-0.2px">0,0</div><div class="bar" style="left:1346px;top:383px;width:62px;height:17px"><i style="width:0.0px"></i><span>0,0</span></div><div class="t" style="left:1079px;top:408px;font-size:13px">Neděle</div><div class="t" style="left:1129px;top:408px;width:75px;text-align:right;font-size:13px;letter-spacing:-0.2px">29.10.2023</div><div class="t" style="left:1210px;top:408px;width:61px;text-align:right;font-size:13px;letter-spacing:-0.2px">0,0</div><div class="t" style="left:1277px;top:408px;width:61px;text-align:right;font-size:13px;letter-spacing:-0.2px">0,0</div><div class="bar" style="left:1346px;top:405px;width:62px;height:17px"><i style="width:0.0px"></i><span>0,0</span></div>
<div class="a" style="position:absolute;left:1419px;top:270px;width:2px;height:17px;background:#8a8a8a"></div>
<div class="a" style="position:absolute;left:1073px;top:429px;width:356px;height:7px;background:#00aeef"></div><div class="a" style="position:absolute;left:1242px;top:431px;width:3px;height:3px;background:#5ccdf6;border-radius:50%"></div><div class="a" style="position:absolute;left:1250px;top:431px;width:3px;height:3px;background:#5ccdf6;border-radius:50%"></div><div class="a" style="position:absolute;left:1258px;top:431px;width:3px;height:3px;background:#5ccdf6;border-radius:50%"></div>
<div class="sec" style="position:absolute;left:1073px;top:439px;width:356px;height:25px;"></div><svg class="a" style="left:1077px;top:444px" width="19" height="18"><path d="M1.6 2.7Q5 1.7 8.5 2.7Q12 1.7 15.4 2.7V13.6Q12 12.7 8.5 13.6Q5 12.7 1.6 13.6Z M8.5 2.7V14.2" stroke="#fff" stroke-width="1.15" fill="none"/><path d="M13.1 14.3H18.1L15.6 17.3Z" fill="#fff"/></svg><div class="t" style="left:1100px;top:446px;font-weight:bold;font-size:13px;color:#fff">Směny</div><div class="a" style="position:absolute;left:1404px;top:440px;width:1px;height:23px;background:#1a8fcf"></div><svg class="a" style="left:1407px;top:444.3px" width="19" height="14"><path d="M0 2.00H19M0 7.25H19M0 12.50H19" stroke="#fff" stroke-width="1.5"/></svg>
<div class="a" style="position:absolute;left:1073px;top:464px;width:356px;height:98px;background:#fcfcfc"></div>
<div class="a" style="position:absolute;left:1073px;top:464px;width:354px;height:21px;background:#f0f0f0"></div><div class="a" style="position:absolute;left:1073px;top:485px;width:355px;height:1px;background:#d9d9d9"></div><div class="a" style="position:absolute;left:1073px;top:486px;width:354px;height:21px;background:#e3e3e3"></div><div class="a" style="position:absolute;left:1073px;top:507px;width:355px;height:1px;background:#d9d9d9"></div><div class="a" style="position:absolute;left:1073px;top:508px;width:354px;height:21px;background:#fcfcfc"></div><div class="a" style="position:absolute;left:1073px;top:529px;width:355px;height:1px;background:#d9d9d9"></div><div class="a" style="position:absolute;left:1073px;top:530px;width:354px;height:21px;background:#fcfcfc"></div><div class="a" style="position:absolute;left:1073px;top:551px;width:355px;height:1px;background:#d9d9d9"></div><div class="a" style="position:absolute;left:1226px;top:464px;width:1px;height:88px;background:#d9d9d9"></div><div class="a" style="position:absolute;left:1293px;top:464px;width:1px;height:88px;background:#d9d9d9"></div><div class="a" style="position:absolute;left:1360px;top:464px;width:1px;height:88px;background:#d9d9d9"></div><div class="a" style="position:absolute;left:1427px;top:464px;width:1px;height:88px;background:#d9d9d9"></div><div class="t lbl" style="left:1079px;top:469px;font-size:11.5px">Směna</div><div class="t lbl" style="left:1227px;top:469px;width:61px;text-align:right;font-size:11.5px">Kapacita</div><div class="t lbl" style="left:1294px;top:469px;width:61px;text-align:right;font-size:11.5px">Požadavky</div><div class="t lbl" style="left:1361px;top:469px;width:61px;text-align:right;font-size:11.5px">Vytížení %</div><div class="t" style="left:1079px;top:491px;font-size:13px">&lt;All&gt;</div><div class="t" style="left:1227px;top:491px;width:61px;text-align:right;font-size:13px;letter-spacing:-0.2px">2 880,0</div><div class="t" style="left:1294px;top:491px;width:61px;text-align:right;font-size:13px;letter-spacing:-0.2px">2 470,0</div><div class="bar" style="left:1363px;top:488px;width:62px;height:17px"><i style="width:51.5px"></i><span>85,8</span></div><div class="t" style="left:1079px;top:513px;font-size:13px"></div><div class="t" style="left:1227px;top:513px;width:61px;text-align:right;font-size:13px;letter-spacing:-0.2px">0,0</div><div class="t" style="left:1294px;top:513px;width:61px;text-align:right;font-size:13px;letter-spacing:-0.2px">970,0</div><div class="bar" style="left:1363px;top:510px;width:62px;height:17px"><i style="width:0.0px"></i><span>0,0</span></div><div class="t" style="left:1079px;top:535px;font-size:13px">1ranní</div><div class="t" style="left:1227px;top:535px;width:61px;text-align:right;font-size:13px;letter-spacing:-0.2px">2 880,0</div><div class="t" style="left:1294px;top:535px;width:61px;text-align:right;font-size:13px;letter-spacing:-0.2px">1 500,0</div><div class="bar" style="left:1363px;top:532px;width:62px;height:17px"><i style="width:31.3px"></i><span>52,1</span></div>
<div class="a" style="position:absolute;left:1073px;top:565px;width:356px;height:7px;background:#00aeef"></div><div class="a" style="position:absolute;left:1242px;top:567px;width:3px;height:3px;background:#5ccdf6;border-radius:50%"></div><div class="a" style="position:absolute;left:1250px;top:567px;width:3px;height:3px;background:#5ccdf6;border-radius:50%"></div><div class="a" style="position:absolute;left:1258px;top:567px;width:3px;height:3px;background:#5ccdf6;border-radius:50%"></div>
<div class="sec" style="position:absolute;left:1073px;top:575px;width:356px;height:25px;"></div><svg class="a" style="left:1077px;top:580px" width="19" height="18"><path d="M1.6 2.7Q5 1.7 8.5 2.7Q12 1.7 15.4 2.7V13.6Q12 12.7 8.5 13.6Q5 12.7 1.6 13.6Z M8.5 2.7V14.2" stroke="#fff" stroke-width="1.15" fill="none"/><path d="M13.1 14.3H18.1L15.6 17.3Z" fill="#fff"/></svg><div class="t" style="left:1100px;top:582px;font-weight:bold;font-size:13px;color:#fff">Zdroje</div><div class="a" style="position:absolute;left:1404px;top:576px;width:1px;height:23px;background:#1a8fcf"></div><svg class="a" style="left:1407px;top:580.3px" width="19" height="14"><path d="M0 2.00H19M0 7.25H19M0 12.50H19" stroke="#fff" stroke-width="1.5"/></svg>
<div class="a" style="position:absolute;left:1073px;top:600px;width:356px;height:143px;background:#fcfcfc"></div>
<div class="a" style="position:absolute;left:1073px;top:600px;width:354px;height:21px;background:#f0f0f0"></div><div class="a" style="position:absolute;left:1073px;top:621px;width:355px;height:1px;background:#d9d9d9"></div><div class="a" style="position:absolute;left:1073px;top:622px;width:354px;height:21px;background:#e3e3e3"></div><div class="a" style="position:absolute;left:1073px;top:643px;width:355px;height:1px;background:#d9d9d9"></div><div class="a" style="position:absolute;left:1073px;top:644px;width:354px;height:21px;background:#fcfcfc"></div><div class="a" style="position:absolute;left:1073px;top:665px;width:355px;height:1px;background:#d9d9d9"></div><div class="a" style="position:absolute;left:1073px;top:666px;width:354px;height:21px;background:#fcfcfc"></div><div class="a" style="position:absolute;left:1073px;top:687px;width:355px;height:1px;background:#d9d9d9"></div><div class="a" style="position:absolute;left:1073px;top:688px;width:354px;height:21px;background:#fcfcfc"></div><div class="a" style="position:absolute;left:1073px;top:709px;width:355px;height:1px;background:#d9d9d9"></div><div class="a" style="position:absolute;left:1073px;top:710px;width:354px;height:21px;background:#fcfcfc"></div><div class="a" style="position:absolute;left:1073px;top:731px;width:355px;height:1px;background:#d9d9d9"></div><div class="a" style="position:absolute;left:1226px;top:600px;width:1px;height:132px;background:#d9d9d9"></div><div class="a" style="position:absolute;left:1293px;top:600px;width:1px;height:132px;background:#d9d9d9"></div><div class="a" style="position:absolute;left:1360px;top:600px;width:1px;height:132px;background:#d9d9d9"></div><div class="a" style="position:absolute;left:1427px;top:600px;width:1px;height:132px;background:#d9d9d9"></div><div class="t lbl" style="left:1079px;top:605px;font-size:11.5px">Zdroj<svg width="13" height="8" style="vertical-align:top;margin-top:2px;margin-left:2px"><path d="M2.5 7L6 3.5L9.5 7Z" fill="#9a9a9a"/></svg></div><div class="t lbl" style="left:1227px;top:605px;width:61px;text-align:right;font-size:11.5px">Kapacita</div><div class="t lbl" style="left:1294px;top:605px;width:61px;text-align:right;font-size:11.5px">Požadavky</div><div class="t lbl" style="left:1361px;top:605px;width:61px;text-align:right;font-size:11.5px">Vytížení %</div><div class="t" style="left:1079px;top:627px;font-size:13px">&lt;All&gt;</div><div class="t" style="left:1227px;top:627px;width:61px;text-align:right;font-size:13px;letter-spacing:-0.2px">2 880,0</div><div class="t" style="left:1294px;top:627px;width:61px;text-align:right;font-size:13px;letter-spacing:-0.2px">2 470,0</div><div class="bar" style="left:1363px;top:624px;width:62px;height:17px"><i style="width:51.5px"></i><span>85,8</span></div><div class="t" style="left:1079px;top:649px;font-size:13px">MONTAZNI STOLY-V300</div><div class="t" style="left:1227px;top:649px;width:61px;text-align:right;font-size:13px;letter-spacing:-0.2px">0,0</div><div class="t" style="left:1294px;top:649px;width:61px;text-align:right;font-size:13px;letter-spacing:-0.2px">2 470,0</div><div class="bar" style="left:1363px;top:646px;width:62px;height:17px"><i style="width:0.0px"></i><span>0,0</span></div><div class="t" style="left:1079px;top:671px;font-size:13px">V300-MS-01</div><div class="t" style="left:1227px;top:671px;width:61px;text-align:right;font-size:13px;letter-spacing:-0.2px">960,0</div><div class="t" style="left:1294px;top:671px;width:61px;text-align:right;font-size:13px;letter-spacing:-0.2px">0,0</div><div class="bar" style="left:1363px;top:668px;width:62px;height:17px"><i style="width:0.0px"></i><span>0,0</span></div><div class="t" style="left:1079px;top:693px;font-size:13px">V300-MS-02</div><div class="t" style="left:1227px;top:693px;width:61px;text-align:right;font-size:13px;letter-spacing:-0.2px">960,0</div><div class="t" style="left:1294px;top:693px;width:61px;text-align:right;font-size:13px;letter-spacing:-0.2px">0,0</div><div class="bar" style="left:1363px;top:690px;width:62px;height:17px"><i style="width:0.0px"></i><span>0,0</span></div><div class="t" style="left:1079px;top:715px;font-size:13px">V300-MS-03</div><div class="t" style="left:1227px;top:715px;width:61px;text-align:right;font-size:13px;letter-spacing:-0.2px">960,0</div><div class="t" style="left:1294px;top:715px;width:61px;text-align:right;font-size:13px;letter-spacing:-0.2px">0,0</div><div class="bar" style="left:1363px;top:712px;width:62px;height:17px"><i style="width:0.0px"></i><span>0,0</span></div>
<div class="sec" style="position:absolute;left:1073px;top:746px;width:356px;height:25px;"></div><div class="t" style="left:1077px;top:753px;font-weight:bold;font-size:13px;color:#fff">Nastavení 23.10.2023- 22.11.2023</div><div class="a" style="position:absolute;left:1404px;top:747px;width:1px;height:23px;background:#1a8fcf"></div><svg class="a" style="left:1409px;top:754px" width="15" height="9"><path d="M1 8L7.5 1.5L14 8" stroke="#fff" stroke-width="1.4" fill="none"/></svg>
<div class="a" style="position:absolute;left:1073px;top:771px;width:356px;height:167px;background:#fcfcfc"></div>
<div class="t lbl" style="left:1087px;top:779px">Datum od</div>
<div class="t lbl" style="left:1262px;top:779px">do</div>
<div class="a" style="position:absolute;left:1080px;top:792px;width:169px;height:23px;background:#fdfde6;border:1px solid #00aeef"></div>
<div class="t" style="left:1100px;top:799px;width:127px;text-align:right;font-size:12.5px;letter-spacing:-0.1px">23.10.2023</div>
<svg class="a" style="left:1231px;top:797px" width="14" height="14"><rect x="0.6" y="0.9" width="11.8" height="11.6" rx="1.6" stroke="#5580bd" stroke-width="1.2" fill="none"/><rect x="0.6" y="0.9" width="11.8" height="3" fill="#5580bd"/><path d="M5 5.5h1.2v1.2h-1.2ZM7 5.5h1.2v1.2h-1.2ZM9 5.5h1.2v1.2h-1.2ZM3 7.5h1.2v1.2h-1.2ZM5 7.5h1.2v1.2h-1.2ZM7 7.5h1.2v1.2h-1.2ZM9 7.5h1.2v1.2h-1.2ZM3 9.5h1.2v1.2h-1.2ZM5 9.5h1.2v1.2h-1.2ZM7 9.5h1.2v1.2h-1.2Z" fill="#3d6db3"/></svg>
<div class="a" style="position:absolute;left:1255px;top:792px;width:167px;height:23px;background:#fdfde6;border:1px solid #00aeef"></div>
<div class="t" style="left:1273px;top:799px;width:127px;text-align:right;font-size:12.5px;letter-spacing:-0.1px">22.11.2023</div>
<svg class="a" style="left:1404px;top:797px" width="14" height="14"><rect x="0.6" y="0.9" width="11.8" height="11.6" rx="1.6" stroke="#5580bd" stroke-width="1.2" fill="none"/><rect x="0.6" y="0.9" width="11.8" height="3" fill="#5580bd"/><path d="M5 5.5h1.2v1.2h-1.2ZM7 5.5h1.2v1.2h-1.2ZM9 5.5h1.2v1.2h-1.2ZM3 7.5h1.2v1.2h-1.2ZM5 7.5h1.2v1.2h-1.2ZM7 7.5h1.2v1.2h-1.2ZM9 7.5h1.2v1.2h-1.2ZM3 9.5h1.2v1.2h-1.2ZM5 9.5h1.2v1.2h-1.2ZM7 9.5h1.2v1.2h-1.2Z" fill="#3d6db3"/></svg>
<div class="cb cby" style="left:1081px;top:824px"></div>
<div class="t lbl" style="left:1104px;top:827px">Rozvrh výroby</div>
<div class="cb cby" style="left:1256px;top:824px"></div>
<div class="t lbl" style="left:1279px;top:827px">Povolit kolize</div>
<div class="cb cby" style="left:1081px;top:853px"></div>
<div class="t lbl" style="left:1104px;top:856px">Přetížené zdroje</div>
<div class="cb" style="left:1081px;top:882px;background:#0f4c9c;border-color:#0f4c9c"></div>
<svg class="a" style="left:1084px;top:886px" width="12" height="10"><path d="M1 5L4.5 8.5L11 1.5" stroke="#fff" stroke-width="1.8" fill="none"/></svg>
<div class="t lbl" style="left:1104px;top:885px">Detailní filtrování rozvrhu výroby</div>
<div class="a" style="position:absolute;left:1080px;top:908px;width:82px;height:23px;background:#00aeef"></div>
<div class="t w" style="left:1080px;top:914px;width:82px;text-align:center">1m</div>
<div class="a" style="position:absolute;left:1168px;top:908px;width:81px;height:23px;background:#00aeef"></div>
<div class="a" style="position:absolute;left:1255px;top:908px;width:81px;height:23px;background:#00aeef"></div>
<div class="t w" style="left:1255px;top:914px;width:81px;text-align:center">h</div>
<svg class="a" style="left:1199px;top:911px" width="18" height="18"><path d="M3 6A7 7 0 1 1 6 15.5" stroke="#fff" stroke-width="1.2" fill="none"/><path d="M9 5V10H12.5" stroke="#fff" stroke-width="1.2" fill="none"/><path d="M1 13.5L4 16.5L5.5 12.5" stroke="#fff" stroke-width="1.2" fill="none"/></svg>
<div class="a" style="position:absolute;left:1342px;top:908px;width:80px;height:23px;background:#0096cc;border:2px solid #005078"></div>
<div class="t w" style="left:1342px;top:914px;width:80px;text-align:center">m</div>
</body></html>
